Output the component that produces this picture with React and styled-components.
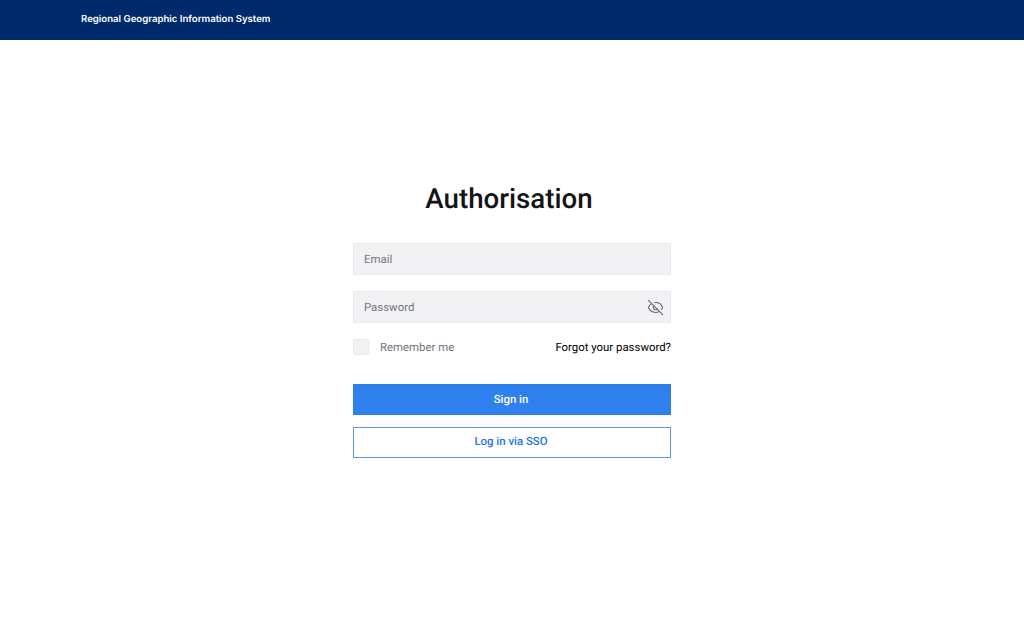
import styled, { createGlobalStyle } from "styled-components";
import { EyeOff } from "lucide-react";

const GlobalStyle = createGlobalStyle`
  html, body {
    margin: 0;
    padding: 0;
    background: #FFFFFF;
    font-family: Roboto, "Liberation Sans", sans-serif;
    text-rendering: geometricPrecision;
  }
`
const HeaderStyled = styled.header`
  height: 40px;
  background: #002A6B;
  display: flex;
  align-items: center;
  padding-left: 81px;
  padding-bottom: 1px;
  box-sizing: border-box;
`
const BrandStyled = styled.span`
  font-family: Inter, sans-serif;
  font-weight: 600;
  font-size: 9.6px;
  color: #FFFFFF;
`
const MainStyled = styled.main`
  display: flex;
  flex-direction: column;
  align-items: center;
  padding-top: 140px;
`
const TitleStyled = styled.h1`
  font-weight: 500;
  font-size: 27.7px;
  line-height: 38px;
  color: #131416;
  margin: 0 0 25px;
  transform: translateX(-3px);
`
const FormStyled = styled.form`
  width: 318px;
  display: flex;
  flex-direction: column;
`
const FieldStyled = styled.div`
  height: 32px;
  box-sizing: border-box;
  background: #F2F2F4;
  border: 1px solid #E8E9EC;
  display: flex;
  align-items: center;
  justify-content: space-between;
  padding: 0 6px 0 10px;
  margin-bottom: 16px;
  font-size: 11.4px;
  color: #6F7782;
`
const OptionsStyled = styled.div`
  display: flex;
  align-items: center;
  justify-content: space-between;
  height: 16px;
  margin-bottom: 29px;
  font-size: 11.4px;
`
const RememberStyled = styled.label`
  display: flex;
  align-items: center;
  gap: 11px;
  color: #6F7782;
`
const CheckboxStyled = styled.span`
  width: 16px;
  height: 16px;
  box-sizing: border-box;
  background: #F2F2F4;
  border: 1px solid #E8E9EC;
  border-radius: 2px;
`
const ForgotStyled = styled.a`
  color: #000000;
`
const ButtonStyled = styled.button`
  height: 31px;
  margin-bottom: ${(props) => props.$gap}px;
  font-family: inherit;
  font-weight: 500;
  font-size: 11.4px;
  text-rendering: geometricPrecision;
  border: 1px solid ${(props) => (props.$outline ? "#5C97EE" : "#2F7BE6")};
  border-radius: 0;
  padding: 0 2px ${(props) => (props.$outline ? 3 : 2)}px 0;
  background: ${(props) => (props.$outline ? "#FFFFFF" : "#2F80EF")};
  color: ${(props) => (props.$outline ? "#1F75E8" : "#FFFFFF")};
`

export default function App() {
    return (
        <>
            <GlobalStyle />
            <HeaderStyled>
                <BrandStyled>Regional Geographic Information System</BrandStyled>
            </HeaderStyled>
            <MainStyled>
                <TitleStyled>Authorisation</TitleStyled>
                <FormStyled>
                    <FieldStyled>Email</FieldStyled>
                    <FieldStyled>
                        Password
                        <EyeOff size={17} color="#5F6773" strokeWidth={1.5} />
                    </FieldStyled>
                    <OptionsStyled>
                        <RememberStyled>
                            <CheckboxStyled />
                            Remember me
                        </RememberStyled>
                        <ForgotStyled>Forgot your password?</ForgotStyled>
                    </OptionsStyled>
                    <ButtonStyled type="button" $gap={12}>Sign in</ButtonStyled>
                    <ButtonStyled type="button" $gap={0} $outline>Log in via SSO</ButtonStyled>
                </FormStyled>
            </MainStyled>
        </>
    )
}
